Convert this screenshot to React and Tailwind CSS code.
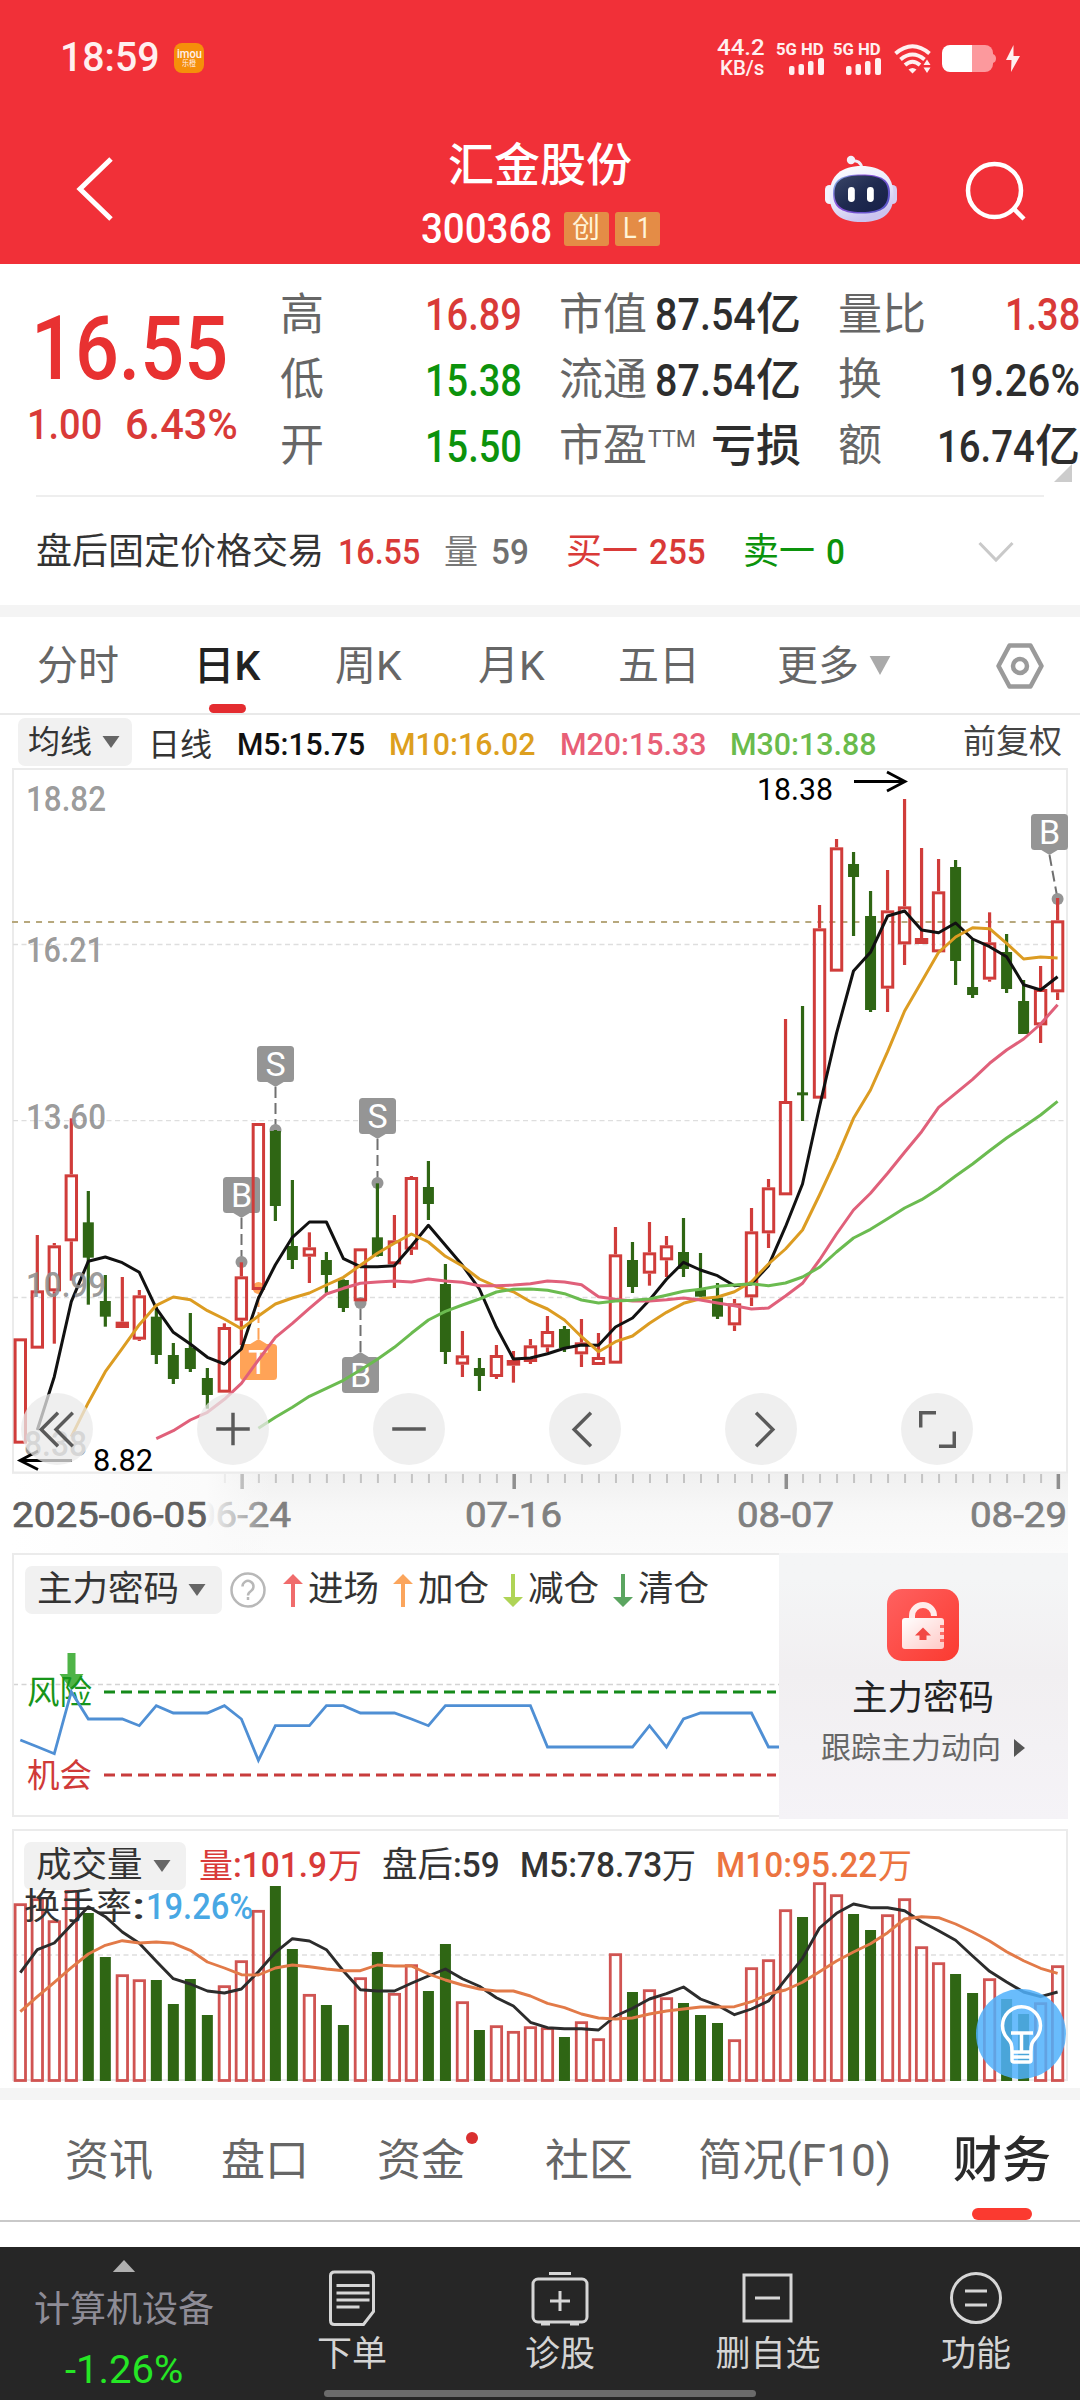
import React, { useLayoutEffect, useRef, useState } from "react";

/* ---------- helpers ---------- */

/* Squeezes its text horizontally so that it fills the width set by its class. */
function Fit({ className = "", children }) {
  const outer = useRef(null);
  const inner = useRef(null);
  const [scale, setScale] = useState(1);
  useLayoutEffect(() => {
    const measure = () => {
      if (inner.current.offsetWidth) setScale(outer.current.clientWidth / inner.current.offsetWidth);
    };
    measure();
    if (document.fonts) document.fonts.ready.then(measure);
  }, []);
  return (
    <span ref={outer} className={"block shrink-0 " + className}>
      <span ref={inner} className="inline-block origin-left whitespace-nowrap align-top" style={{ transform: `scaleX(${scale})` }}>
        {children}
      </span>
    </span>
  );
}

const Caret = ({ className = "" }) => (
  <svg className={"shrink-0 " + className} viewBox="0 0 18 12" preserveAspectRatio="none" fill="currentColor">
    <path d="M0.5 0h17L9 12z" />
  </svg>
);

/* ---------- data ---------- */

const X0 = 20.3;
const STEP = 17.005;
const px = (i) => X0 + i * STEP;
const py = (v) => 1120 + v / 3;
const vy = (v) => 1820 + v / 3;

/* [rising, high, body top, body bottom, low] */
const CANDLES = [
  [1, 655, 655, 971, 971], [1, 345, 511, 686, 686], [1, 369, 376, 514, 671], [1, -5, 163, 364, 482],
  [0, 213, 307, 413, 554], [0, 465, 543, 590, 620], [1, 471, 605, 624, 624], [1, 510, 526, 659, 663],
  [0, 560, 590, 705, 732], [0, 669, 705, 777, 792], [0, 579, 684, 747, 756], [0, 744, 774, 825, 866],
  [1, 610, 621, 818, 818], [1, 427, 469, 602, 675], [1, 9, 9, 510, 510], [0, 30, 33, 258, 303],
  [0, 180, 378, 420, 447], [1, 337, 382, 410, 489], [0, 396, 420, 465, 520], [0, 478, 480, 564, 576],
  [1, 385, 385, 544, 544], [0, 190, 352, 408, 410], [1, 285, 361, 433, 504], [1, 168, 171, 389, 405],
  [0, 123, 201, 252, 300], [0, 432, 492, 696, 732], [1, 633, 706, 734, 771], [0, 714, 744, 768, 813],
  [1, 675, 705, 771, 777], [1, 693, 720, 737, 788], [1, 657, 676, 726, 732], [1, 588, 633, 682, 697],
  [0, 618, 627, 684, 696], [1, 597, 667, 703, 741], [1, 639, 711, 735, 735], [1, 321, 403, 731, 731],
  [0, 366, 420, 501, 519], [1, 306, 397, 461, 497], [1, 348, 376, 421, 471], [0, 294, 396, 447, 471],
  [0, 399, 510, 530, 530], [0, 489, 533, 590, 597], [1, 537, 550, 616, 633], [1, 264, 334, 532, 558],
  [1, 177, 202, 340, 384], [1, -303, -57, 226, 226], [0, -342, -83, -74, 3], [1, -645, -575, -64, -64],
  [1, -843, -818, -445, -445], [0, -804, -768, -729, -552], [0, -687, -612, -330, -324], [1, -750, -629, -394, -324],
  [1, -963, -641, -527, -465], [1, -816, -546, -528, -528], [1, -783, -686, -503, -503], [0, -780, -759, -477, -405],
  [0, -540, -399, -375, -366], [1, -623, -533, -421, -415], [0, -558, -504, -393, -381], [0, -420, -357, -258, -258],
  [1, -462, -393, -284, -231], [1, -666, -599, -383, -360],
];

const MA5 = [930, 770, 545, 424, 411, 428, 457, 565, 637, 672, 712, 732, 687, 535, 434, 352, 306, 306, 416, 440, 440, 437, 378, 316, 376, 436, 507, 622, 717, 714, 701, 685, 675, 676, 621, 594, 540, 478, 427, 450, 467, 497, 492, 437, 320, 192, -40, -260, -447, -503, -612, -627, -570, -562, -591, -543, -520, -490, -406, -390, -430];
const MA10 = [950, 848, 755, 685, 614, 556, 531, 539, 572, 597, 626, 588, 552, 534, 519, 495, 472, 436, 400, 370, 342, 366, 409, 438, 477, 500, 515, 545, 567, 600, 650, 695, 665, 648, 610, 577, 550, 536, 531, 515, 485, 432, 387, 330, 225, 115, -5, -90, -205, -327, -415, -503, -549, -577, -574, -530, -483, -489, -486];
const MA20 = [956, 932, 900, 877, 838, 790, 720, 652, 610, 565, 522, 505, 490, 486, 483, 486, 477, 483, 487, 497, 497, 495, 491, 483, 486, 494, 530, 538, 543, 543, 539, 534, 540, 549, 557, 567, 564, 528, 490, 420, 342, 270, 220, 160, 97, 35, -38, -80, -122, -170, -210, -243, -288, -346];
const MA30 = [925, 892, 862, 829, 805, 781, 750, 718, 682, 640, 600, 574, 555, 537, 516, 508, 507, 511, 521, 540, 549, 543, 541, 537, 526, 514, 508, 499, 495, 491, 497, 489, 471, 442, 396, 354, 328, 296, 264, 239, 206, 168, 132, 92, 54, 20, -15, -56];

const VOLUME = [251, 236, 302, 207, 279, 411, 464, 479, 480, 552, 477, 585, 497, 422, 271, 198, 387, 523, 555, 615, 473, 396, 520, 434, 513, 372, 545, 630, 617, 634, 620, 623, 651, 605, 656, 401, 516, 509, 533, 549, 585, 609, 659, 443, 419, 269, 291, 188, 224, 282, 330, 284, 236, 380, 428, 462, 519, 476, 537, 582, 548, 437];
const VMA5 = [458, 389, 369, 315, 260, 290, 336, 370, 424, 476, 492, 513, 519, 507, 455, 397, 356, 363, 389, 453, 509, 513, 513, 490, 468, 447, 476, 499, 533, 558, 607, 623, 626, 626, 630, 588, 565, 537, 521, 501, 537, 556, 584, 567, 543, 478, 415, 324, 280, 252, 263, 263, 272, 305, 332, 361, 408, 454, 486, 516, 530, 516];
const VMA10 = [575, 530, 487, 443, 402, 376, 362, 369, 366, 370, 391, 426, 444, 464, 465, 444, 435, 440, 447, 452, 452, 435, 438, 438, 462, 480, 495, 507, 513, 513, 528, 550, 563, 582, 594, 597, 594, 582, 573, 567, 561, 561, 560, 545, 522, 510, 487, 455, 423, 396, 371, 338, 297, 290, 293, 312, 336, 363, 395, 422, 445, 460];

const SIGNAL = [600, 620, 641, 455, 537, 537, 537, 557, 497, 519, 519, 519, 497, 537, 661, 557, 557, 557, 497, 497, 519, 519, 519, 537, 557, 497, 497, 497, 497, 497, 497, 621, 621, 621, 621, 621, 621, 557, 621, 537, 519, 519, 519, 519, 621, 621];

const points = (values, start, y) => values.map((v, i) => `${px(i + start).toFixed(1)},${y(v).toFixed(1)}`).join(" ");

/* ---------- status bar and header ---------- */

const Signal = () => (
  <svg className="h-[17px] w-9" viewBox="0 0 36 17" fill="#fff0f0">
    <rect x="1" y="8" width="5.500" height="9" rx="2" />
    <rect x="10.500" y="6" width="5.500" height="11" rx="2" />
    <rect x="20" y="3" width="5.500" height="14" rx="2" />
    <rect x="30" y="0" width="6" height="17" rx="2" />
  </svg>
);

function StatusBar() {
  return (
    <div className="flex h-[114px] items-center pl-[60px] text-[#fff0f0]">
      <Fit className="mt-px w-[99px] text-[40px] font-medium leading-none">18:59</Fit>
      <div className="ml-[15px] mt-[2px] flex size-[30px] flex-col items-center justify-center rounded-[8px] bg-[#f58f0a] leading-none">
        <Fit className="w-[25px] text-[12px] font-medium leading-[11px]">imou</Fit>
        <Fit className="w-[14px] text-[8px] leading-[8px]">乐橙</Fit>
      </div>
      <div className="ml-[513px] w-[48px] leading-none">
        <Fit className="mt-px w-[48px] text-[22px] font-medium leading-[20px]">44.2</Fit>
        <Fit className="ml-[3px] w-[44px] text-[20px] font-medium leading-[20px]">KB/s</Fit>
      </div>
      <div className="ml-[11px] mt-px flex w-[48px] flex-col items-end">
        <Fit className="w-[48px] text-[17px] font-bold leading-[18px]">5G HD</Fit>
        <Signal />
      </div>
      <div className="ml-[9px] mt-px flex w-[48px] flex-col items-end">
        <Fit className="w-[48px] text-[17px] font-bold leading-[18px]">5G HD</Fit>
        <Signal />
      </div>
      <svg className="ml-[13px] mt-[3px] h-[30px] w-[38px]" viewBox="0 0 38 30" fill="none" stroke="#fff0f0" strokeWidth="4">
        <path d="M1.500 9.500Q18.500 -5 35.500 9.500" />
        <path d="M6.500 15.500Q18.500 5.500 30.500 15.500" />
        <path d="M11 21Q18.500 14.500 26 21" />
        <path d="M14.500 25.500L18.500 29.500L22.500 25.500Q18.500 22.500 14.500 25.500z" fill="#fff0f0" stroke="none" />
        <path d="M33 15.500l3.500 5.500h-7zM33 29l-3.500-5.500h7z" fill="#fff0f0" stroke="none" />
      </svg>
      <svg className="ml-[10px] mt-[3px] h-[27px] w-[54px]" viewBox="0 0 54 27">
        <path d="M29 0h14a8 8 0 0 1 8 8v11a8 8 0 0 1-8 8H29z" fill="#fc999d" />
        <path d="M51 9q3 1 3 4.500t-3 4.500z" fill="#fc999d" />
        <path d="M30 0H8a8 8 0 0 0-8 8v11a8 8 0 0 0 8 8h22z" fill="white" />
      </svg>
      <svg className="ml-[9px] mt-[3px] h-[27px] w-[16px]" viewBox="0 0 16 27" fill="#fff0f0">
        <path d="M8.500 0L1 15h5.500L6 27l9-16H8.500z" />
      </svg>
    </div>
  );
}

const Robot = () => (
  <svg className="h-[70px] w-[74px]" viewBox="0 0 74 70">
    <defs>
      <linearGradient id="shell" x1="0" y1="0" x2="0.4" y2="1">
        <stop offset="0" stopColor="#ffffff" />
        <stop offset="0.6" stopColor="#e8e8fa" />
        <stop offset="1" stopColor="#cbc3ef" />
      </linearGradient>
      <linearGradient id="rim" x1="0" y1="0" x2="1" y2="0.6">
        <stop offset="0" stopColor="#7ec8e6" />
        <stop offset="0.4" stopColor="#8d4fd8" />
        <stop offset="1" stopColor="#5b55c8" />
      </linearGradient>
      <linearGradient id="visor" x1="0" y1="0" x2="1" y2="1">
        <stop offset="0" stopColor="#3a4566" />
        <stop offset="0.5" stopColor="#1f2a50" />
        <stop offset="1" stopColor="#161f47" />
      </linearGradient>
    </defs>
    <path d="M26 6q11-2 12 8" fill="none" stroke="#f0eef9" strokeWidth="3" />
    <circle cx="27" cy="5" r="4.200" fill="#f3f1fb" />
    <rect x="1" y="30" width="9" height="19" rx="4.500" fill="#f4f3fc" />
    <rect x="64" y="30" width="9" height="19" rx="4.500" fill="#d5cff2" />
    <path d="M5.500 40C5.500 20 18 11 37.500 11S69.500 20 69.500 40 57 67 37.500 67 5.500 60 5.500 40z" fill="url(#shell)" />
    <path d="M9 38C9 25 17 19.500 37.500 19.500S66 25 66 38 60 58.500 37.500 58.500 9 51 9 38z" fill="url(#rim)" />
    <path d="M10.500 38C10.500 26 18 20.500 37.500 20.500S64 26 64 38 58 57 37.500 57 10.500 50 10.500 38z" fill="url(#visor)" />
    <rect x="24" y="32" width="6.800" height="15" rx="3.400" fill="white" />
    <rect x="43" y="32" width="6.800" height="15" rx="3.400" fill="white" />
  </svg>
);

function Header() {
  return (
    <header className="h-[264px] bg-[#f13038]">
      <StatusBar />
      <div className="flex h-[150px] text-white">
        <div className="w-[412px] pl-[74px] pt-[42px]">
          <svg className="h-[66px] w-[42px]" viewBox="0 0 42 66" fill="none" stroke="white" strokeWidth="5">
            <path d="M37 3L6 33l31 30" />
          </svg>
        </div>
        <div className="flex w-[256px] flex-col items-center">
          <div className="mt-[28px] text-[46px] font-medium leading-[46px]">汇金股份</div>
          <div className="mt-[17px] flex items-center">
            <Fit className="mt-px w-[131px] text-[42px] font-medium leading-[46px]">300368</Fit>
            <span className="ml-[12px] flex h-[34px] w-[45px] items-center justify-center rounded-[3px] bg-[#e48c46] text-[28px] leading-none text-[#fff4d8]">创</span>
            <span className="ml-[6px] flex h-[34px] w-[45px] items-center justify-center rounded-[3px] bg-[#e48c46] text-[29px] leading-none text-[#fff4d8]">
              <Fit className="w-[28px]">L1</Fit>
            </span>
          </div>
        </div>
        <div className="flex w-[412px] pl-[156px] pt-[41px]">
          <Robot />
          <svg className="ml-[64px] mt-[2px] h-[70px] w-[70px]" viewBox="0 0 70 70" fill="none" stroke="white" strokeWidth="4.500">
            <circle cx="32.500" cy="33.500" r="26.500" />
            <path d="M51 51l11 11" />
          </svg>
        </div>
      </div>
    </header>
  );
}

/* ---------- quote ---------- */

const RED = "text-[#d93a38]";
const GREEN = "text-[#0c930c]";

function Quote() {
  return (
    <section className="h-[341px]">
      <div className="flex h-[232px] overflow-hidden">
        <div className="w-[280px]">
          <Fit className="ml-[31px] mt-[40px] w-[197px] text-[89px] font-medium leading-[90px] text-[#e83131]">16.55</Fit>
          <div className={"mt-[6px] flex " + RED}>
            <Fit className="ml-[27px] w-[75px] text-[43px] font-medium leading-[48px]">1.00</Fit>
            <Fit className="ml-[23px] w-[113px] text-[43px] font-medium leading-[48px]">6.43%</Fit>
          </div>
        </div>
        <div className="mt-[18px] grid h-[197px] w-[800px] grid-cols-[242px_37px_242px_37px_242px] grid-rows-3 text-[45px] text-[#666]">
          <Pair label="高"><Fit className="w-[97px] text-[#d93a38]">16.89</Fit></Pair>
          <i />
          <Pair label="市值"><Fit className="w-[101px]">87.54</Fit>亿</Pair>
          <i />
          <Pair label="量比"><Fit className="w-[75px] text-[#d93a38]">1.38</Fit></Pair>
          <Pair label="低"><Fit className="w-[97px] text-[#0c930c]">15.38</Fit></Pair>
          <i />
          <Pair label="流通"><Fit className="w-[101px]">87.54</Fit>亿</Pair>
          <i />
          <Pair label="换"><Fit className="w-[132px]">19.26%</Fit></Pair>
          <Pair label="开"><Fit className="w-[97px] text-[#0c930c]">15.50</Fit></Pair>
          <i />
          <Pair label={<>市盈<Fit className="mb-[14px] ml-px w-[48px] text-[24px]">TTM</Fit></>}>亏损</Pair>
          <i />
          <Pair label="额"><Fit className="w-[98px]">16.74</Fit>亿</Pair>
        </div>
      </div>
      <div className="-mt-[32px] flex h-[33px] justify-end border-b-2 border-[#eee] ml-9 mr-9">
        <svg className="-mr-[28px] h-[18px] w-[18px]" viewBox="0 0 18 18"><path d="M18 0v18H0z" fill="#ccc" /></svg>
      </div>
      <div className="flex h-[109px] items-center text-[36px] leading-none text-[#333]">
        <Fit className="ml-[36px] w-[288px]">盘后固定价格交易</Fit>
        <Fit className={"ml-[14px] mt-px w-[82px] text-[35px] font-medium " + RED}>16.55</Fit>
        <span className="ml-[24px] text-[34px] text-[#777]">量</span>
        <Fit className="ml-[13px] mt-px w-[38px] text-[35px] font-medium text-[#707070]">59</Fit>
        <span className={"ml-[37px] " + RED}>买一</span>
        <Fit className={"ml-[11px] mt-px w-[57px] text-[35px] font-medium " + RED}>255</Fit>
        <span className={"ml-[37px] " + GREEN}>卖一</span>
        <Fit className={"ml-[11px] mt-px w-[19px] text-[35px] font-medium " + GREEN}>0</Fit>
        <svg className="ml-[133px] h-[22px] w-[36px]" viewBox="0 0 36 22" fill="none" stroke="#c9c9c9" strokeWidth="3">
          <path d="M1.500 2L18 19 34.500 2" />
        </svg>
      </div>
    </section>
  );
}

function Pair({ label, children }) {
  return (
    <div className="flex items-center justify-between whitespace-nowrap leading-none">
      <span className="flex items-center text-[44px]">{label}</span>
      <span className="flex items-center text-[45px] font-medium text-[#2d2d2d]">{children}</span>
    </div>
  );
}

/* ---------- chart period tabs ---------- */

function PeriodTabs() {
  return (
    <nav className="flex h-[98px] items-start border-b-2 border-[#e9e9e9] pt-[25px] text-[41px] leading-[48px] text-[#666]">
      <span className="ml-[37px] w-[82px] whitespace-nowrap">分时</span>
      <div className="ml-[73px] flex w-[70px] flex-col items-center">
        <span className="whitespace-nowrap font-medium text-[#222]">日K</span>
        <span className="mt-[14px] h-[9px] w-[37px] rounded-[5px] bg-[#e42c30]" />
      </div>
      <span className="ml-[73px] w-[70px] whitespace-nowrap">周K</span>
      <span className="ml-[73px] w-[70px] whitespace-nowrap">月K</span>
      <span className="ml-[70px] w-[82px] whitespace-nowrap">五日</span>
      <span className="ml-[77px] w-[82px] whitespace-nowrap">更多</span>
      <Caret className="ml-[10px] mt-[14px] h-[19px] w-[22px] text-[#aaa]" />
      <svg className="ml-[104px] h-[48px] w-[50px]" viewBox="0 0 50 48" fill="none" stroke="#9a9a9a" strokeWidth="4.500" strokeLinejoin="round">
        <path d="M14.500 3.500h21L46.500 24 35.500 44.500h-21L3.500 24z" />
        <circle cx="25" cy="24" r="7" />
      </svg>
    </nav>
  );
}

function AverageLegend() {
  return (
    <div className="flex h-[53px] items-center text-[32px] font-medium leading-none">
      <div className="ml-[18px] flex h-[48px] w-[114px] items-center rounded-[7px] bg-[#f1f1f1] pl-[10px] font-normal text-[#333]">
        均线<Caret className="ml-[10px] h-[12px] w-[18px] text-[#666]" />
      </div>
      <span className="ml-[16px] mt-[6px] font-normal text-[#333]">日线</span>
      <Fit className="ml-[25px] mt-[4px] w-[128px] text-[#111]">M5:15.75</Fit>
      <Fit className="ml-[24px] mt-[4px] w-[146px] text-[#dd9f1e]">M10:16.02</Fit>
      <Fit className="ml-[25px] mt-[4px] w-[146px] text-[#e85f76]">M20:15.33</Fit>
      <Fit className="ml-[24px] mt-[4px] w-[146px] text-[#6abb4c]">M30:13.88</Fit>
      <span className="ml-[87px] text-[33px] font-normal text-[#444]">前复权</span>
    </div>
  );
}

/* ---------- candle chart ---------- */

function Candle({ i, d }) {
  const [up, hi, top, bottom, lo] = d;
  const x = px(i);
  if (!up) {
    return (
      <g fill="#2f6614">
        <rect x={x - 1.6} y={py(hi)} width="3.200" height={(lo - hi) / 3} />
        <rect x={x - 5.5} y={py(top)} width="11" height={(bottom - top) / 3} />
      </g>
    );
  }
  const flat = bottom - top < 20;
  return (
    <g fill="#d03c3a">
      <rect x={x - 1.6} y={py(hi)} width="3.200" height={(top - hi) / 3} />
      <rect x={x - 1.6} y={py(bottom)} width="3.200" height={(lo - bottom) / 3} />
      <rect
        x={x - 5.2}
        y={py(top) + 1.5}
        width="10.400"
        height={Math.max(1, (bottom - top) / 3 - 3)}
        fill={flat ? "#e03030" : "white"}
        fillOpacity={flat ? 1 : 0}
        stroke="#d03c3a"
        strokeWidth="3"
      />
    </g>
  );
}

/* A lettered box tied by a dashed line to a dot on its candle. */
function Tag({ letter, x, top, dotX = x, dotY, color = "#959595", below }) {
  const tip = below ? top - 5 : top + 41;
  const edge = below ? top + 0.5 : top + 35.5;
  return (
    <g>
      <line x1={x} y1={tip} x2={dotX} y2={dotY} stroke={color !== "#959595" ? color : "#707070"} strokeWidth="2" strokeDasharray="11 5" />
      <circle cx={dotX} cy={dotY} r="6" fill={color} />
      <rect x={x - 18.5} y={top} width="37" height="36" rx="3.500" fill={color} />
      <path d={`M${x - 9} ${edge}L${x} ${tip}L${x + 9} ${edge}z`} fill={color} />
      <text x={x} y={top + 30} textAnchor="middle" fontSize="34" fill="white">{letter}</text>
    </g>
  );
}

const AXIS = [
  ["18.82", 811, 28, 77], ["16.21", 962, 28, 75], ["13.60", 1129, 28, 77], ["10.99", 1297, 28, 77], ["8.38", 1456, 26, 60],
];
const BUTTONS = [
  <path d="M37 20L20 37l17 17M52 20L35 37l17 17" />,
  <path d="M36 20v33M19 36.500h34" />,
  <path d="M19 36.500h34" />,
  <path d="M42 20L25 37l17 17" />,
  <path d="M31 20l17 17-17 17" />,
  <path d="M35 20H19.500v15M38 54h15.500V39" />,
];

function CandleChart() {
  return (
    <div className="relative">
      <svg className="block h-[785px] w-[1080px]" viewBox="0 768 1080 785">
        <defs>
          <linearGradient id="strip" x1="0" y1="0" x2="0" y2="1">
            <stop offset="0" stopColor="#f0f0f0" />
            <stop offset="0.5" stopColor="#f8f8f8" />
            <stop offset="1" stopColor="#fbfbfb" />
          </linearGradient>
          <linearGradient id="fade" x1="0" y1="0" x2="1" y2="0">
            <stop offset="0" stopColor="white" />
            <stop offset="0.75" stopColor="#fbfbfb" />
            <stop offset="1" stopColor="#f8f8f8" stopOpacity="0" />
          </linearGradient>
        </defs>
        <rect x="12" y="1473" width="1056" height="80" fill="url(#strip)" />
        <rect x="13" y="769" width="1054" height="703.500" fill="white" stroke="#ebebeb" strokeWidth="2" />
        {[944.5, 1120.7, 1297.500].map((y) => (
          <line key={y} x1="13" x2="1067" y1={y} y2={y} stroke="#dedede" strokeWidth="1.300" strokeDasharray="5 3.500" />
        ))}
        <line x1="12" x2="1052" y1="922" y2="922" stroke="#b7a87d" strokeWidth="2" strokeDasharray="6 6.020" />

        <Tag letter="S" x={275.5} top={1046} dotY={1130} />
        <Tag letter="S" x={377.5} top={1098} dotY={1183} />
        <Tag letter="B" x={241.5} top={1177} dotY={1262} />
        <Tag letter="B" x={360.5} top={1357} dotY={1303} below />
        <Tag letter="T" x={258.5} top={1344} dotY={1288} color="#ffa357" below />
        <Tag letter="B" x={1049.5} top={814} dotX={1057.6} dotY={899} />

        {CANDLES.map((d, i) => <Candle key={i} i={i} d={d} />)}

        <g fill="none" strokeWidth="3" strokeLinejoin="round">
          <polyline points={points(MA5, 1, py)} stroke="#111" />
          <polyline points={points(MA10, 3, py)} stroke="#dc9c22" />
          <polyline points={points(MA20, 8, py)} stroke="#e0607a" />
          <polyline points={points(MA30, 14, py)} stroke="#6bbb50" />
        </g>

        <g fontSize="35" fontWeight="500" fill="#8e8e8e" fillOpacity="0.9">
          {AXIS.map(([t, y, x, w]) => (
            <text key={t} x={x - 2} y={y} textLength={w + 3} lengthAdjust="spacingAndGlyphs">{t}</text>
          ))}
        </g>
        <g fontSize="32" fill="black">
          <text x="757" y="800" textLength="76" lengthAdjust="spacingAndGlyphs">18.38</text>
          <text x="93" y="1471" textLength="60" lengthAdjust="spacingAndGlyphs">8.82</text>
        </g>
        <path d="M854 781.500h51M887 772l18 9.500-18 9.500M72 1460.500H20M38 1451l-18 9.500 18 9" fill="none" stroke="black" strokeWidth="2.800" />

        {CANDLES.map((_, i) =>
          i < 12 ? null : i % 16 === 13 ? (
            <rect key={i} x={px(i) - 1} y="1474" width="3.500" height="15" fill="#8f8f8f" />
          ) : (
            <rect key={i} x={px(i) - 0.5} y="1474" width="2" height="9" fill="#c4c4c4" />
          )
        )}
        <g fontSize="35" fill="#808080" stroke="#808080" strokeWidth="0.700">
          <text x="194" y="1527" textLength="97" lengthAdjust="spacingAndGlyphs">06-24</text>
          <text x="465" y="1527" textLength="97" lengthAdjust="spacingAndGlyphs">07-16</text>
          <text x="737" y="1527" textLength="97" lengthAdjust="spacingAndGlyphs">08-07</text>
          <text x="970" y="1527" textLength="97" lengthAdjust="spacingAndGlyphs">08-29</text>
          <rect x="11" y="1474" width="260" height="79" fill="url(#fade)" stroke="none" />
          <text x="12" y="1527" textLength="195" lengthAdjust="spacingAndGlyphs" fill="#606060" stroke="#606060">2025-06-05</text>
        </g>
      </svg>
      <div className="absolute left-[21px] top-[625px] flex gap-[104px]">
        {BUTTONS.map((icon, i) => (
          <button key={i} className="size-[72px] rounded-full bg-[#e9e9e9]/75">
            <svg className="size-[72px]" viewBox="0 0 72 73" fill="none" stroke="#5a5a5a" strokeWidth="3.500">{icon}</svg>
          </button>
        ))}
      </div>
    </div>
  );
}

/* ---------- indicator panel ---------- */

const Arrow = ({ className = "", down }) => (
  <svg className={"h-[33px] w-[20px] " + className} viewBox="0 0 20 33" fill="currentColor">
    <path d={down ? "M8 0h4v23h8L10 33 0 23h8z" : "M8 33h4V10h8L10 0 0 10h8z"} />
  </svg>
);

function SignalPanel() {
  return (
    <section className="relative ml-3 flex h-[266px] w-[1056px]">
      <div className="h-[264px] w-[767px] border-2 border-r-0 border-[#ebebeb]">
        <div className="flex h-[70px] items-center pl-[11px] text-[35.500px] leading-none text-[#333]">
          <div className="flex h-[48px] w-[197px] items-center rounded-[7px] bg-[#f1f1f1] pl-[12px]">
            主力密码<Caret className="ml-[9px] h-[12px] w-[18px] text-[#666]" />
          </div>
          <svg className="ml-[8px] size-[36px]" viewBox="0 0 36 36" fill="none" stroke="#b8b8b8" strokeWidth="2.500">
            <circle cx="18" cy="18" r="16.500" />
            <path d="M12.500 14.500a5.500 5.500 0 1 1 8.500 4.500q-3 2-3 4.500M18 25v3" />
          </svg>
          <Arrow className="ml-[17px] text-[#f06c6c]" />
          <span className="ml-[5px]">进场</span>
          <Arrow className="ml-[14px] text-[#fba55c]" />
          <span className="ml-[5px]">加仓</span>
          <Arrow down className="ml-[14px] text-[#afd456]" />
          <span className="ml-[5px]">减仓</span>
          <Arrow down className="ml-[14px] text-[#5ba560]" />
          <span className="ml-[5px]">清仓</span>
        </div>
        <svg className="block h-[190px] w-[765px]" viewBox="14 1625 765 190">
          <line x1="13" x2="779" y1="1684.500" y2="1684.500" stroke="#d4d4d4" strokeWidth="1.300" strokeDasharray="5 3.500" />
          <path d="M67.500 1653h8v21h8L71.500 1690l-12-16h8z" fill="#4fb447" />
          <g fontSize="33">
            <text x="27" y="1704" textLength="65" lengthAdjust="spacingAndGlyphs" fill="#17951a">风险</text>
            <text x="27" y="1787" textLength="65" lengthAdjust="spacingAndGlyphs" fill="#d03a38">机会</text>
          </g>
          <line x1="104" x2="776" y1="1692" y2="1692" stroke="#158a1a" strokeWidth="3" strokeDasharray="11 6" />
          <line x1="104" x2="776" y1="1775" y2="1775" stroke="#c83c3c" strokeWidth="3" strokeDasharray="11 6" />
          <polyline points={points(SIGNAL, 0, (v) => 1540 + v / 3)} fill="none" stroke="#4f8fd4" strokeWidth="2.800" />
        </svg>
      </div>
      <aside className="flex h-[266px] w-[289px] flex-col items-center bg-linear-to-b from-[#f4f5f6] from-10% via-[#f1eff1] via-45% to-[#f5f3f7] pr-px pt-[36px]">
        <svg className="size-[72px]" viewBox="0 0 72 72">
          <defs>
            <linearGradient id="lockbg" x1="0" y1="0" x2="1" y2="1">
              <stop offset="0" stopColor="#ff6160" />
              <stop offset="1" stopColor="#fb3a30" />
            </linearGradient>
            <linearGradient id="lockbody" x1="0" y1="0" x2="1" y2="1">
              <stop offset="0" stopColor="#ffffff" />
              <stop offset="1" stopColor="#ffc9c6" />
            </linearGradient>
          </defs>
          <rect width="72" height="72" rx="15" fill="url(#lockbg)" />
          <path d="M25 31v-4a11 11 0 0 1 22 0v0" fill="none" stroke="#ffeceb" strokeWidth="6" />
          <rect x="15" y="29" width="42" height="31" rx="3" fill="url(#lockbody)" />
          <path d="M36 38.500l8 8h-4.500V51h-7v-4.500H28z" fill="#f24844" />
          <path d="M57 36h-4v3h4zM57 43h-4v3h4zM57 50h-4v3h4z" fill="#fb6f69" />
        </svg>
        <span className="mt-[19px] text-[35.500px] leading-[36px] text-[#222]">主力密码</span>
        <span className="mt-[15px] flex items-center text-[30px] leading-[34px] text-[#666]">
          跟踪主力动向
          <svg className="ml-[13px] h-[18px] w-[11px]" viewBox="0 0 11 18"><path d="M0 0l11 9L0 18z" fill="#555" /></svg>
        </span>
      </aside>
    </section>
  );
}

/* ---------- volume panel ---------- */

function VolumePanel() {
  return (
    <section className="relative mt-[10px] h-[259px]">
      <svg className="block h-[259px] w-[1080px]" viewBox="0 1829 1080 259">
        <path d="M13 2080V1830h1054v250z" fill="none" stroke="#ebebeb" strokeWidth="2" />
        <line x1="13" x2="1067" y1="1955" y2="1955" stroke="#dedede" strokeWidth="1.300" strokeDasharray="5 3.500" />
        {VOLUME.map((v, i) =>
          CANDLES[i][0] ? (
            <rect key={i} x={px(i) - 5.2} y={vy(v) + 1} width="10.400" height={(783 - v) / 3 - 1.5} fill="white" fillOpacity="0" stroke="#d05452" strokeWidth="2.800" />
          ) : (
            <rect key={i} x={px(i) - 5.5} y={vy(v)} width="11" height={(783 - v) / 3} fill="#2f6614" />
          )
        )}
      </svg>
      <div className="absolute left-6 top-3 flex h-[50px] items-center whitespace-nowrap text-[35.500px] leading-none text-[#333]">
        <div className="flex h-[48px] w-[162px] items-center rounded-[7px] bg-[#f1f1f1] pl-[12px]">
          成交量<Caret className="ml-[10px] h-[12px] w-[18px] text-[#666]" />
        </div>
        <span className="ml-[13px] text-[34px] text-[#d93a38]">量</span>
        <Fit className="w-[94px] font-medium text-[#d93a38]">:101.9</Fit>
        <span className="ml-px text-[34px] text-[#d93a38]">万</span>
        <span className="ml-[20px]">盘后</span>
        <Fit className="w-[47px] font-medium">:59</Fit>
        <Fit className="ml-[20px] w-[142px] font-medium">M5:78.73</Fit>
        <span className="text-[34px]">万</span>
        <Fit className="ml-[20px] w-[161px] font-medium text-[#ec7440]">M10:95.22</Fit>
        <span className="ml-px text-[34px] text-[#ec7440]">万</span>
      </div>
      <div className="absolute left-[24px] top-[60px] flex whitespace-nowrap text-[36px] leading-[36px] text-[#333]">
        换手率
        <Fit className="w-[14px] font-medium">:</Fit>
        <Fit className="w-[107px] font-medium text-[#48a8e4]">19.26%</Fit>
      </div>
      <svg className="absolute inset-0 h-[259px] w-[1080px]" viewBox="0 1829 1080 259" fill="none" strokeWidth="2.900" strokeLinejoin="round">
        <polyline points={points(VMA5, 0, vy)} stroke="#2c2c2c" />
        <polyline points={points(VMA10, 0, vy)} stroke="#e27a48" />
      </svg>
      <button className="absolute left-[976px] top-[160px] size-[90px] rounded-full bg-[#4fb0fb]/85">
        <svg className="size-[90px]" viewBox="0 0 90 90" fill="none" stroke="white" strokeWidth="3.500" strokeLinejoin="round">
          <path d="M36 63c0-8-1-10-4-13a19 19 0 1 1 27 0c-3 3-4 5-4 13zM36 63v8q0 2 2 2h15q2 0 2-2v-8M36 68h19M35 44h22M45.500 44v19" />
        </svg>
      </button>
    </section>
  );
}

/* ---------- bottom ---------- */

function InfoTabs() {
  return (
    <nav className="flex h-[122px] items-start border-b-2 border-[#c9c9c9] pt-[33px] text-[44px] leading-[56px] text-[#666] whitespace-nowrap">
      <span className="ml-[65px] w-[88px]">资讯</span>
      <span className="ml-[68px] w-[88px]">盘口</span>
      <span className="ml-[68px] w-[89px]">资金</span>
      <span className="-mt-px size-[12px] rounded-full bg-[#d93030]" />
      <span className="ml-[67px] w-[88px]">社区</span>
      <Fit className="ml-[65px] w-[193px]">简况(F10)</Fit>
      <div className="ml-[62px] flex w-[98px] flex-col items-center">
        <span className="text-[49px] font-medium text-[#2a2a2a]">财务</span>
        <span className="mt-[19px] h-[12px] w-[60px] rounded-[6px] bg-[#fb3a30]" />
      </div>
    </nav>
  );
}

function Action({ className, label, children }) {
  return (
    <div className={"flex flex-col items-center pt-[22px] " + className}>
      <svg className="h-[60px] w-[60px]" viewBox="0 0 60 60" fill="none" stroke="#d6d6d6" strokeWidth="3">{children}</svg>
      <span className="mt-[7px] text-[35px] leading-[38px] text-[#d4d4d4]">{label}</span>
    </div>
  );
}

function BottomBar() {
  return (
    <footer className="h-[153px] bg-[#262626] whitespace-nowrap">
      <div className="flex h-[143px]">
        <div className="flex w-[248px] flex-col items-center pt-[13px]">
          <svg className="h-[14px] w-[26px]" viewBox="0 0 26 14"><path d="M13 0l13 14H0z" fill="#b0b0b0" /></svg>
          <span className="mt-[20px] text-[36px] leading-[36px] text-[#8e8c96]">计算机设备</span>
          <Fit className="mt-[22px] w-[118px] text-[39px] leading-[40px] text-[#25e625]">-1.26%</Fit>
        </div>
        <Action className="w-[208px]" label="下单">
          <path d="M12.500 3h35q4 0 4 4V42.500L41.500 55.500h-29q-4 0-4-4V7q0-4 4-4zM14.500 16.500h33M14.500 24h33M14.500 31h33M14.500 38h23" />
        </Action>
        <Action className="w-[208px]" label="诊股">
          <rect x="3" y="10" width="54" height="43" rx="5" />
          <path d="M19 4.500h22M30 22v20M20 32h20M11 55h9M40 55h9" />
        </Action>
        <Action className="w-[208px]" label="删自选">
          <rect x="6" y="6" width="47" height="46" />
          <path d="M17 29h25" />
        </Action>
        <Action className="w-[208px]" label="功能">
          <circle cx="30" cy="29" r="24.500" />
          <path d="M19 22h22M19 36h22" />
        </Action>
      </div>
      <div className="mx-auto h-[7px] w-[432px] rounded-full bg-[#6b6b6b]" />
    </footer>
  );
}

export default function App() {
  return (
    <div className="h-[2400px] w-[1080px] overflow-hidden bg-white font-[Roboto,'Noto_Sans_CJK_SC',sans-serif]">
      <Header />
      <Quote />
      <div className="h-3 bg-[#f4f4f4]" />
      <PeriodTabs />
      <AverageLegend />
      <CandleChart />
      <SignalPanel />
      <VolumePanel />
      <div className="h-3 bg-[#f4f4f4]" />
      <InfoTabs />
      <div className="h-[25px]" />
      <BottomBar />
    </div>
  );
}
